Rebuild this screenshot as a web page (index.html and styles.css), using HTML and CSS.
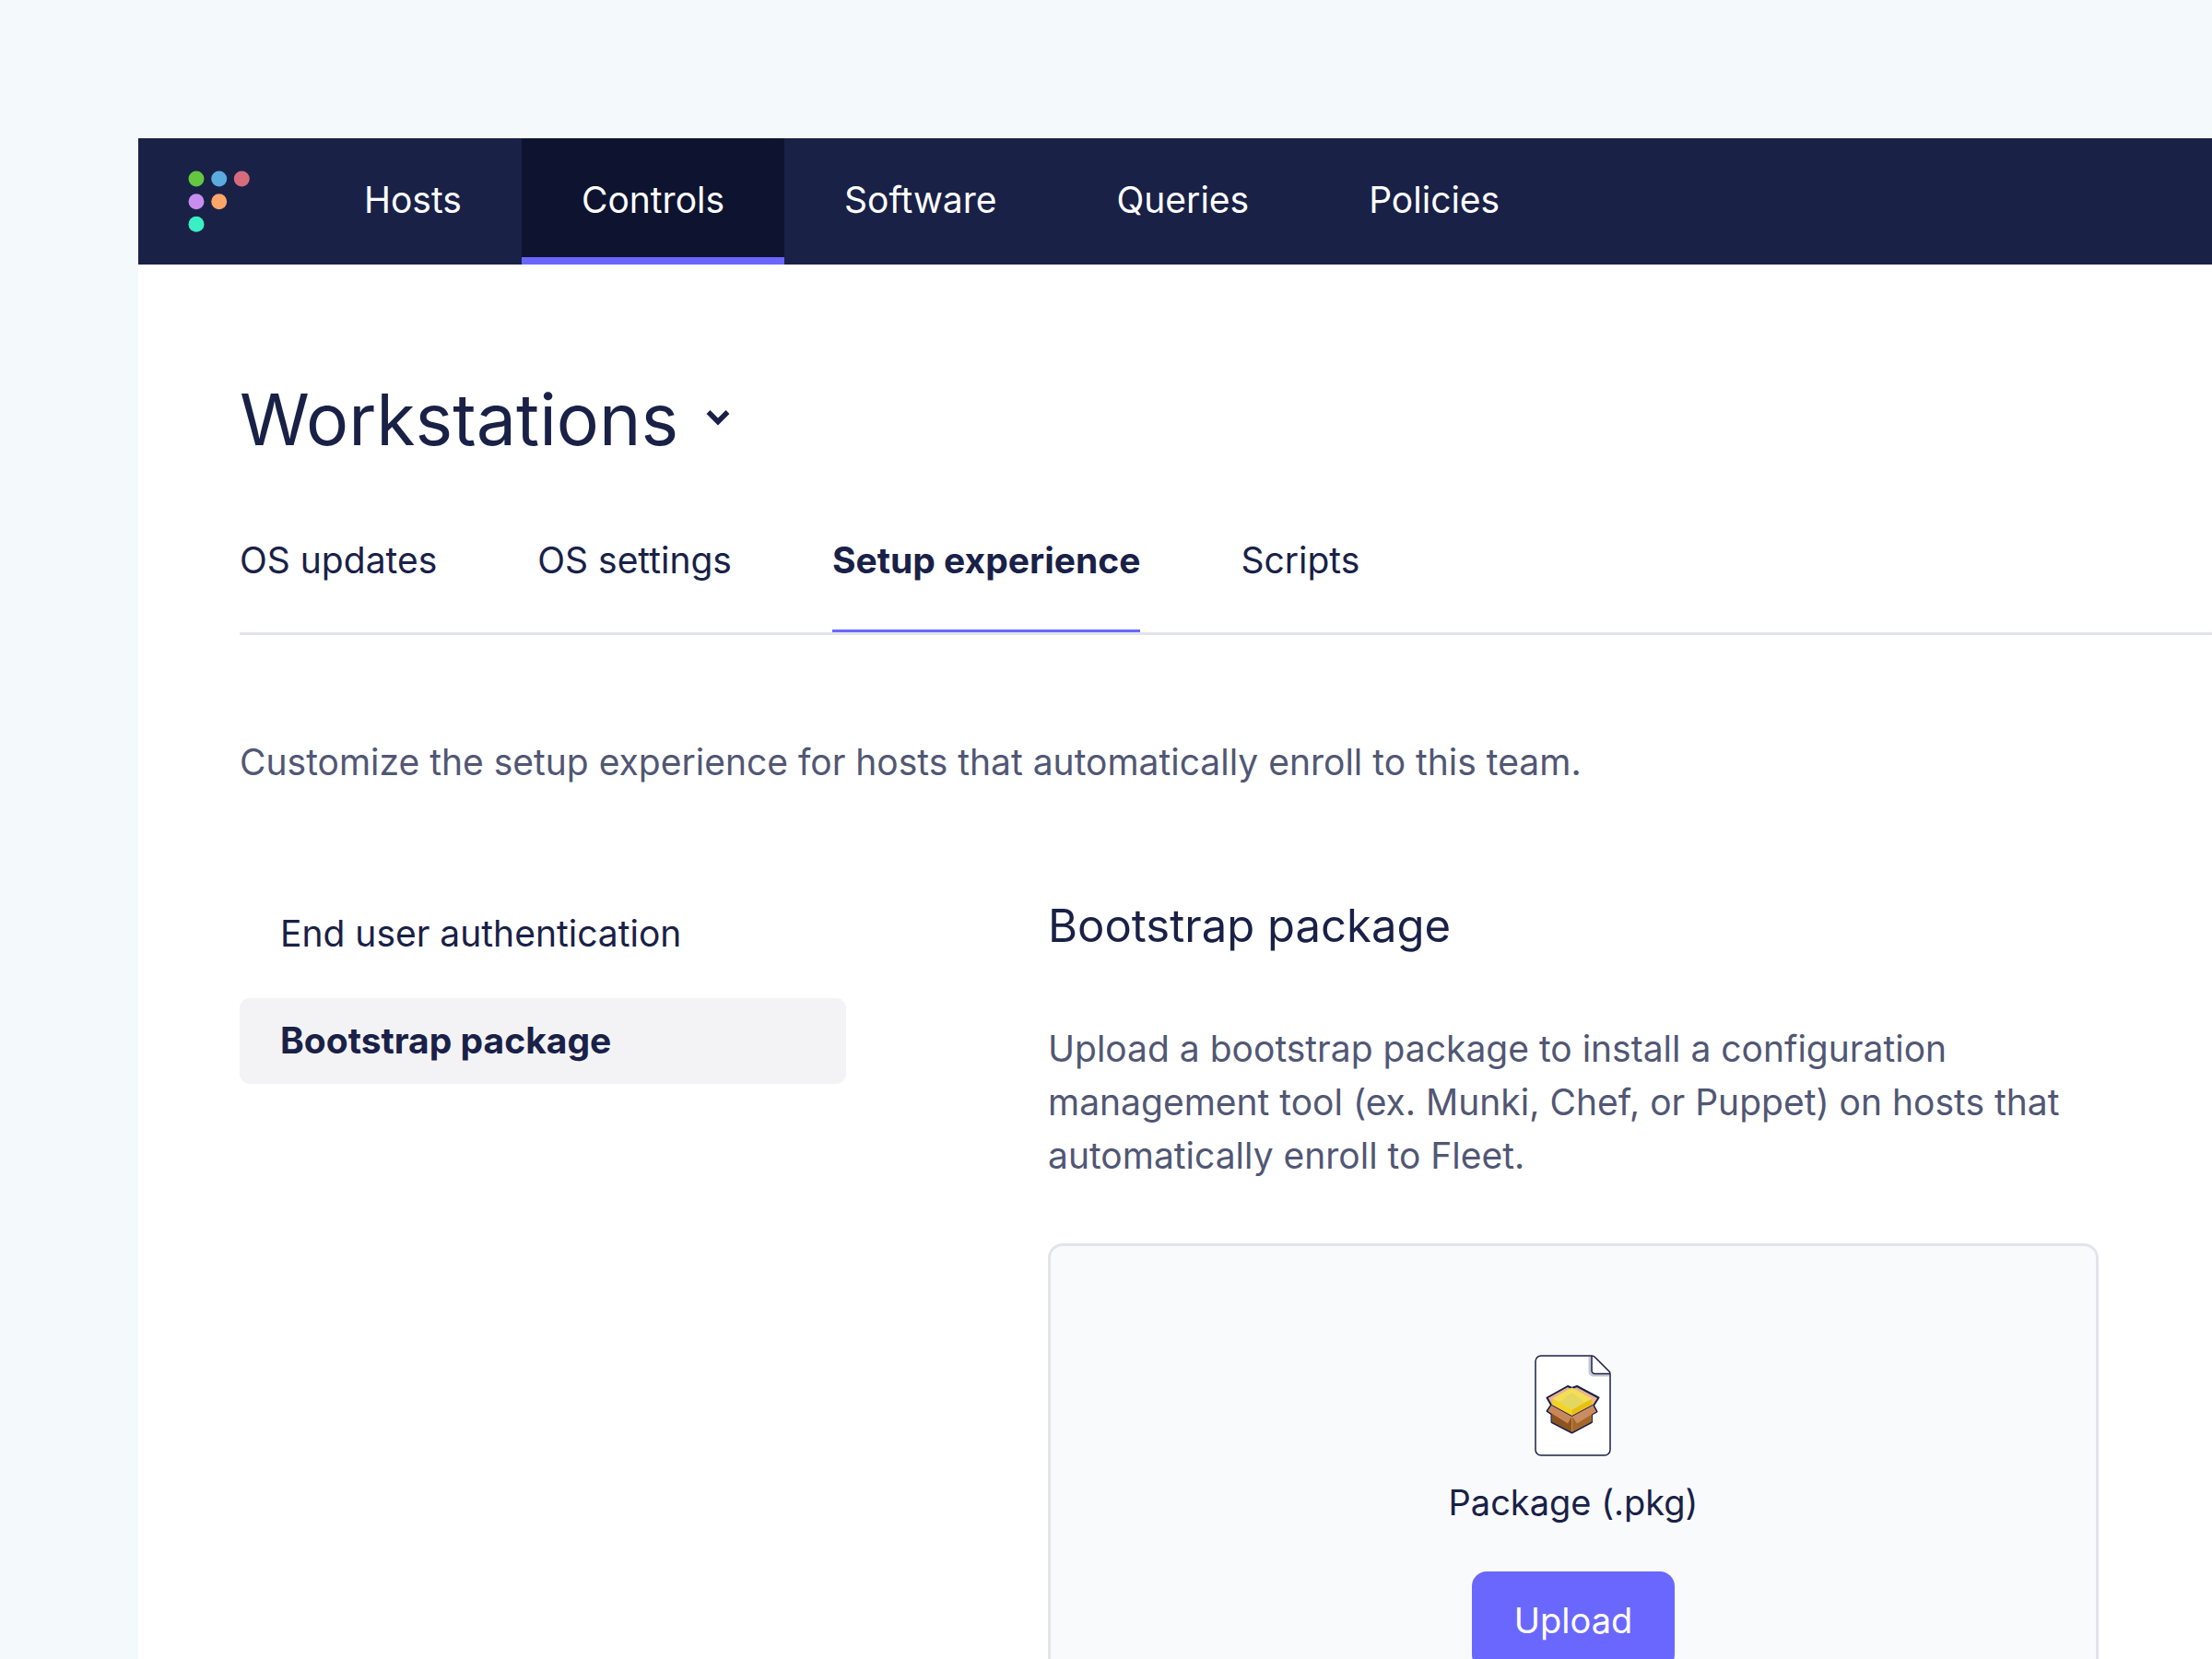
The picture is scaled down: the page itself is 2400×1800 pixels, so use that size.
FILE: index.html
```html
<!DOCTYPE html>
<html lang="en">
<head>
<meta charset="utf-8">
<title>Setup experience | Controls</title>
<meta name="viewport" content="width=device-width, initial-scale=1">
<link rel="stylesheet" href="styles.css">
</head>
<body>
<div class="window">
  <header class="topbar">
    <a class="logo" href="#" aria-label="Home">
      <svg width="68" height="68" viewBox="0 0 68 68" aria-hidden="true">
        <circle cx="9" cy="9" r="8.5" fill="#63c740"/>
        <circle cx="33.7" cy="9" r="8.5" fill="#5cabdf"/>
        <circle cx="58.3" cy="9" r="8.5" fill="#d66c7b"/>
        <circle cx="9" cy="33.7" r="8.5" fill="#c98def"/>
        <circle cx="33.7" cy="33.7" r="8.5" fill="#faa669"/>
        <circle cx="9" cy="58.3" r="8.5" fill="#3aefc3"/>
      </svg>
    </a>
    <nav class="topnav" aria-label="Main">
      <a class="topnav-link" href="#">Hosts</a>
      <a class="topnav-link is-active" href="#" aria-current="page">Controls</a>
      <a class="topnav-link" href="#">Software</a>
      <a class="topnav-link" href="#">Queries</a>
      <a class="topnav-link" href="#">Policies</a>
    </nav>
  </header>

  <main class="content">
    <div class="team-picker">
      <select class="team-select" aria-label="Team">
        <option>Workstations</option>
      </select>
      <svg class="team-caret" width="26" height="18" viewBox="0 0 26 18" aria-hidden="true">
        <path d="M2.5 3 L13 13.5 L23.5 3" fill="none" stroke="#192147" stroke-width="5.5"/>
      </svg>
    </div>

    <nav class="tabs" aria-label="Controls">
      <a class="tab" href="#">OS updates</a>
      <a class="tab" href="#">OS settings</a>
      <a class="tab is-active" href="#" aria-current="page">Setup experience</a>
      <a class="tab" href="#">Scripts</a>
    </nav>

    <p class="intro">Customize the setup experience for hosts that automatically enroll to this team.</p>

    <div class="columns">
      <nav class="sidenav" aria-label="Setup experience">
        <a class="sidenav-link" href="#">End user authentication</a>
        <a class="sidenav-link is-active" href="#" aria-current="page">Bootstrap package</a>
      </nav>

      <section class="panel">
        <h2 class="panel-title">Bootstrap package</h2>
        <p class="panel-text">Upload a bootstrap package to install a configuration management tool (ex. Munki, Chef, or Puppet) on hosts that automatically enroll to Fleet.</p>
        <div class="uploader">
          <svg class="file-icon" width="84" height="110" viewBox="0 0 84 110" aria-hidden="true">
            <path d="M7 1 H62.5 L82 20.5 V103 A6 6 0 0 1 76 109 H7 A6 6 0 0 1 1 103 V7 A6 6 0 0 1 7 1Z" fill="#fff"/>
            <path d="M60 2 V18 A4 4 0 0 0 64 22 H81" fill="none" stroke="#c5c7d1" stroke-width="3"/>
            <path d="M7 1 H62 Q64 1 65.500 2.500 L81 18 Q82 19 82 21 V103 A6 6 0 0 1 76 109 H7 A6 6 0 0 1 1 103 V7 A6 6 0 0 1 7 1Z" fill="none" stroke="#192147" stroke-width="1.500"/>
            <path d="M62 1 V17 A3.500 3.500 0 0 0 65.500 20.500 H82" fill="none" stroke="#192147" stroke-width="1.500"/>
            <path d="M36 34 L40.500 36 L46 34 L69.500 46.500 L64 55 L67.500 61.500 L62 64.500 V73 L40.500 84.500 L18.500 73 V64.500 L13.500 61 L18 54.500 L13.500 46.500Z" fill="#ebb391" stroke="#192147" stroke-width="2" stroke-linejoin="round"/>
            <path d="M18.500 60 L40.500 66 V84 L18.500 72.500Z" fill="#8b5320"/>
            <path d="M62 60 L40.500 66 V84 L62 72.500Z" fill="#a56829"/>
            <path d="M18.500 54.500 L40.500 66.500 L36 74.500 L14.500 61Z" fill="#c98759"/>
            <path d="M63 54.500 L40.500 66.500 L46 74.500 L67 61.500Z" fill="#cb8c61"/>
            <path d="M40.500 66.500 V83" stroke="#c98759" stroke-width="1"/>
            <path d="M19.500 48 L40.500 59 L62 48 V54 L40.500 65.500 L19.500 54Z" fill="#f4d51c"/>
            <path d="M40.500 59 L62 48 V54 L40.500 65.500Z" fill="#e9c00e"/>
            <path d="M40.500 35.500 L62 47.500 L40.500 59.500 L19.500 47.500Z" fill="#f2df53"/>
            <path d="M40.500 41 L54 51.500 L40.500 59.500 L27 51.500Z" fill="#e4d75f"/>
            <path d="M18.500 54.500 L40.500 66.500 L63 54.500" fill="none" stroke="#192147" stroke-width="1"/>
          </svg>
          <p class="file-name">Package (.pkg)</p>
          <button class="upload-button" type="button">Upload</button>
        </div>
      </section>
    </div>
  </main>
</div>
</body>
</html>
```
FILE: styles.css
```css
:root {
  --navy: #192147;
  --navy-dark: #0e142f;
  --slate: #515774;
  --purple: #6a67fe;
  --line: #e2e4ea;
}

* {
  box-sizing: border-box;
}

body {
  margin: 0;
  height: 100vh;
  overflow: hidden;
  padding: 150px 0 0 150px;
  background: #f4f9fc;
  color: var(--navy);
  font-family: Inter, "Liberation Sans", sans-serif;
  font-size: 39px;
  line-height: 58px;
}

a {
  color: inherit;
  text-decoration: none;
}

h2,
p {
  margin: 0;
}

.window {
  min-height: 100%;
  background: #fff;
}

.topbar {
  display: flex;
  height: 137px;
  background: var(--navy);
  color: #fff;
}

.logo {
  display: flex;
  align-items: center;
  padding: 0 58px 0 54px;
}

.topnav {
  display: flex;
}

.topnav-link {
  display: flex;
  align-items: center;
  padding: 0 65px 4px;
}

.topnav-link.is-active {
  background: var(--navy-dark);
  box-shadow: inset 0 -8px var(--purple);
}

.content {
  padding: 120px 0 0 110px;
}

.team-picker {
  display: flex;
  align-items: center;
  gap: 29px;
}

.team-select {
  appearance: none;
  padding: 0;
  border: 0;
  background: none;
  color: inherit;
  font: inherit;
  font-size: 77px;
  line-height: 96px;
}

.team-caret {
  margin-bottom: 4px;
}

.tabs {
  display: flex;
  gap: 109px;
  margin-top: 41px;
  border-bottom: 3px solid var(--line);
}

.tab {
  padding: 35px 0 49px;
}

.tab.is-active {
  font-weight: 700;
  box-shadow: inset 0 -3px var(--purple);
}

.intro {
  margin-top: 109px;
  color: var(--slate);
}

.columns {
  display: grid;
  grid-template-columns: 658fr 1140fr;
  gap: 219px;
  align-items: start;
  margin-top: 111px;
  padding-right: 123px;
}

.sidenav {
  display: grid;
  gap: 23px;
}

.sidenav-link {
  padding: 17px 44px 18px;
  border-radius: 11px;
}

.sidenav-link.is-active {
  background: #f3f3f6;
  font-weight: 700;
}

.panel {
  padding-top: 8px;
}

.panel-title {
  font-size: 49px;
  font-weight: 400;
  line-height: 60px;
}

.panel-text {
  margin-top: 74px;
  color: var(--slate);
}

.uploader {
  display: flex;
  flex-direction: column;
  align-items: center;
  margin-top: 66px;
  padding: 118px 44px;
  border: 3px solid var(--line);
  border-radius: 16px;
  background: #f9fafc;
  font-size: 38px;
}

.file-name {
  margin-top: 21px;
}

.upload-button {
  margin-top: 46px;
  padding: 24px 46px;
  border: 0;
  border-radius: 16px;
  background: var(--purple);
  color: #fff;
  font: inherit;
}
```
